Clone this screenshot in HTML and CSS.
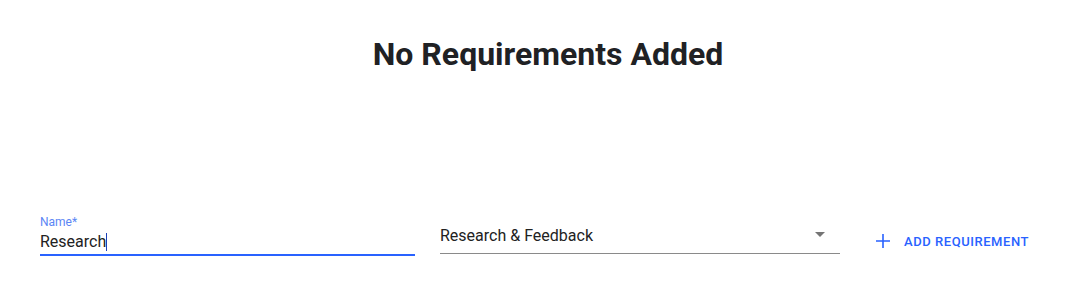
FILE: index.html
```html
<!DOCTYPE html>
<html lang="en">
<head>
  <meta charset="UTF-8" />
  <title>Requirements</title>
  <link rel="stylesheet" href="styles.css">
</head>
<body>
  <div class="page">
    <h1 class="empty-title">No Requirements Added</h1>

    <div class="req-form">
      <div class="field name-field">
        <label class="field-label">Name*</label>
        <div class="field-input">Research<span class="caret"></span></div>
      </div>

      <div class="field select-field">
        <div class="select-value">Research &amp; Feedback</div>
        <svg class="select-arrow" width="24" height="24" viewBox="0 0 24 24"><path d="M7 10l5 5 5-5z" fill="#757575"/></svg>
      </div>

      <button class="add-btn">
        <svg width="24" height="24" viewBox="0 0 24 24"><path d="M19 12.8h-6.2V19h-1.6v-6.2H5v-1.6h6.2V5h1.6v6.2H19z" fill="#2962ff"/></svg>
        <span>Add Requirement</span>
      </button>
    </div>
  </div>
</body>
</html>
```

FILE: styles.css
```css
body {
  margin: 0;
  background: #fff;
  font-family: Roboto, "Liberation Sans", sans-serif;
  color: #212121;
}
.page {
  padding: 34px 30px 0 40px;
}
.empty-title {
  margin: 0;
  text-align: center;
  font-size: 32px;
  font-weight: 700;
  line-height: 40px;
  color: #202124;
}
.req-form {
  display: flex;
  align-items: flex-start;
  margin-top: 141px;
}
.name-field {
  width: 375px;
  border-bottom: 2px solid #2962ff;
}
.field-label {
  display: block;
  font-size: 12px;
  line-height: 14px;
  color: #5b86f5;
}
.field-input {
  font-size: 16px;
  line-height: 20px;
  padding: 3px 0 2px;
  color: #222;
}
.caret {
  display: inline-block;
  width: 1px;
  height: 18px;
  background: #1a3fb8;
  vertical-align: -4px;
}
.select-field {
  width: 400px;
  height: 38px;
  margin-left: 25px;
  border-bottom: 1px solid #8a8a8a;
  display: flex;
  align-items: center;
  justify-content: space-between;
}
.select-value {
  font-size: 16px;
  color: #222;
  padding-top: 3px;
}
.select-arrow {
  margin-right: 8px;
}
.add-btn {
  display: flex;
  align-items: center;
  gap: 9px;
  margin-left: 23px;
  margin-top: 11px;
  padding: 3px 8px;
  border: 0;
  background: none;
  font-family: Roboto, "Liberation Sans", sans-serif;
  font-size: 13px;
  font-weight: 500;
  letter-spacing: 0.55px;
  text-transform: uppercase;
  color: #2962ff;
  cursor: pointer;
}
```
